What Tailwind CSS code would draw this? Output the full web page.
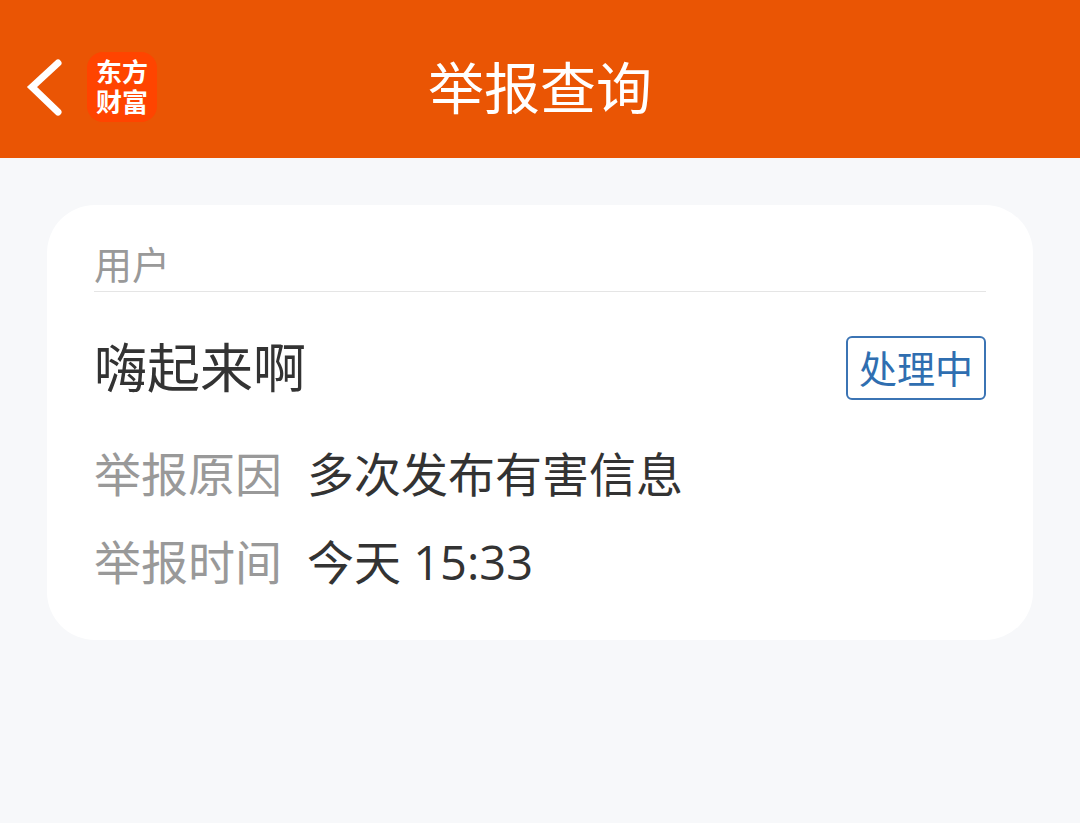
<!DOCTYPE html>
<html lang="zh-CN">
<head>
    <meta charset="UTF-8">
    <meta name="viewport" content="width=device-width, initial-scale=1.0">
    <title>举报查询</title>
    <script src="https://cdn.jsdelivr.net/npm/@tailwindcss/browser@4"></script>
</head>
<body class="min-h-screen bg-[#f7f8fa] font-['Open_Sans','Noto_Sans_CJK_SC',sans-serif] text-[#333333]">
    <header class="grid h-[158px] grid-cols-[1fr_auto_1fr] items-center bg-[#ea5504] px-6 pt-4 text-white">
        <div class="flex items-center gap-[23px]">
            <button type="button" aria-label="返回" class="flex">
                <svg class="h-16 w-10" viewBox="0 0 40 64" fill="none" stroke="currentColor" stroke-width="7" stroke-linecap="round"><path d="M34 8L8 32L34 57" /></svg>
            </button>
            <a href="#" class="flex size-[70px] items-center justify-center rounded-2xl bg-[#ff4400] text-center text-[26px] leading-[30px] font-bold text-white">东方<br>财富</a>
        </div>
        <h1 class="text-[56px] leading-[64px]">举报查询</h1>
    </header>

    <main class="px-[47px] pt-[47px]">
        <section class="rounded-[48px] bg-white px-[47px] pt-9 pb-[34px]">
            <div class="border-b border-[#e5e5e5] pb-1 text-[38px] leading-[46px] text-[#999999]">用户</div>
            <div class="mt-11 flex items-center justify-between">
                <h2 class="text-[53px] leading-[64px]">嗨起来啊</h2>
                <span class="rounded-md border-2 border-[#3b74b4] px-[11px] text-[38px] leading-[60px] text-[#2f6eb0]">处理中</span>
            </div>
            <dl class="mt-[30px] grid grid-cols-[auto_1fr] gap-x-[25px] text-[47px] leading-[88px]">
                <dt class="text-[#999999]">举报原因</dt>
                <dd>多次发布有害信息</dd>
                <dt class="text-[#999999]">举报时间</dt>
                <dd>今天 15:33</dd>
            </dl>
        </section>
    </main>
</body>
</html>
